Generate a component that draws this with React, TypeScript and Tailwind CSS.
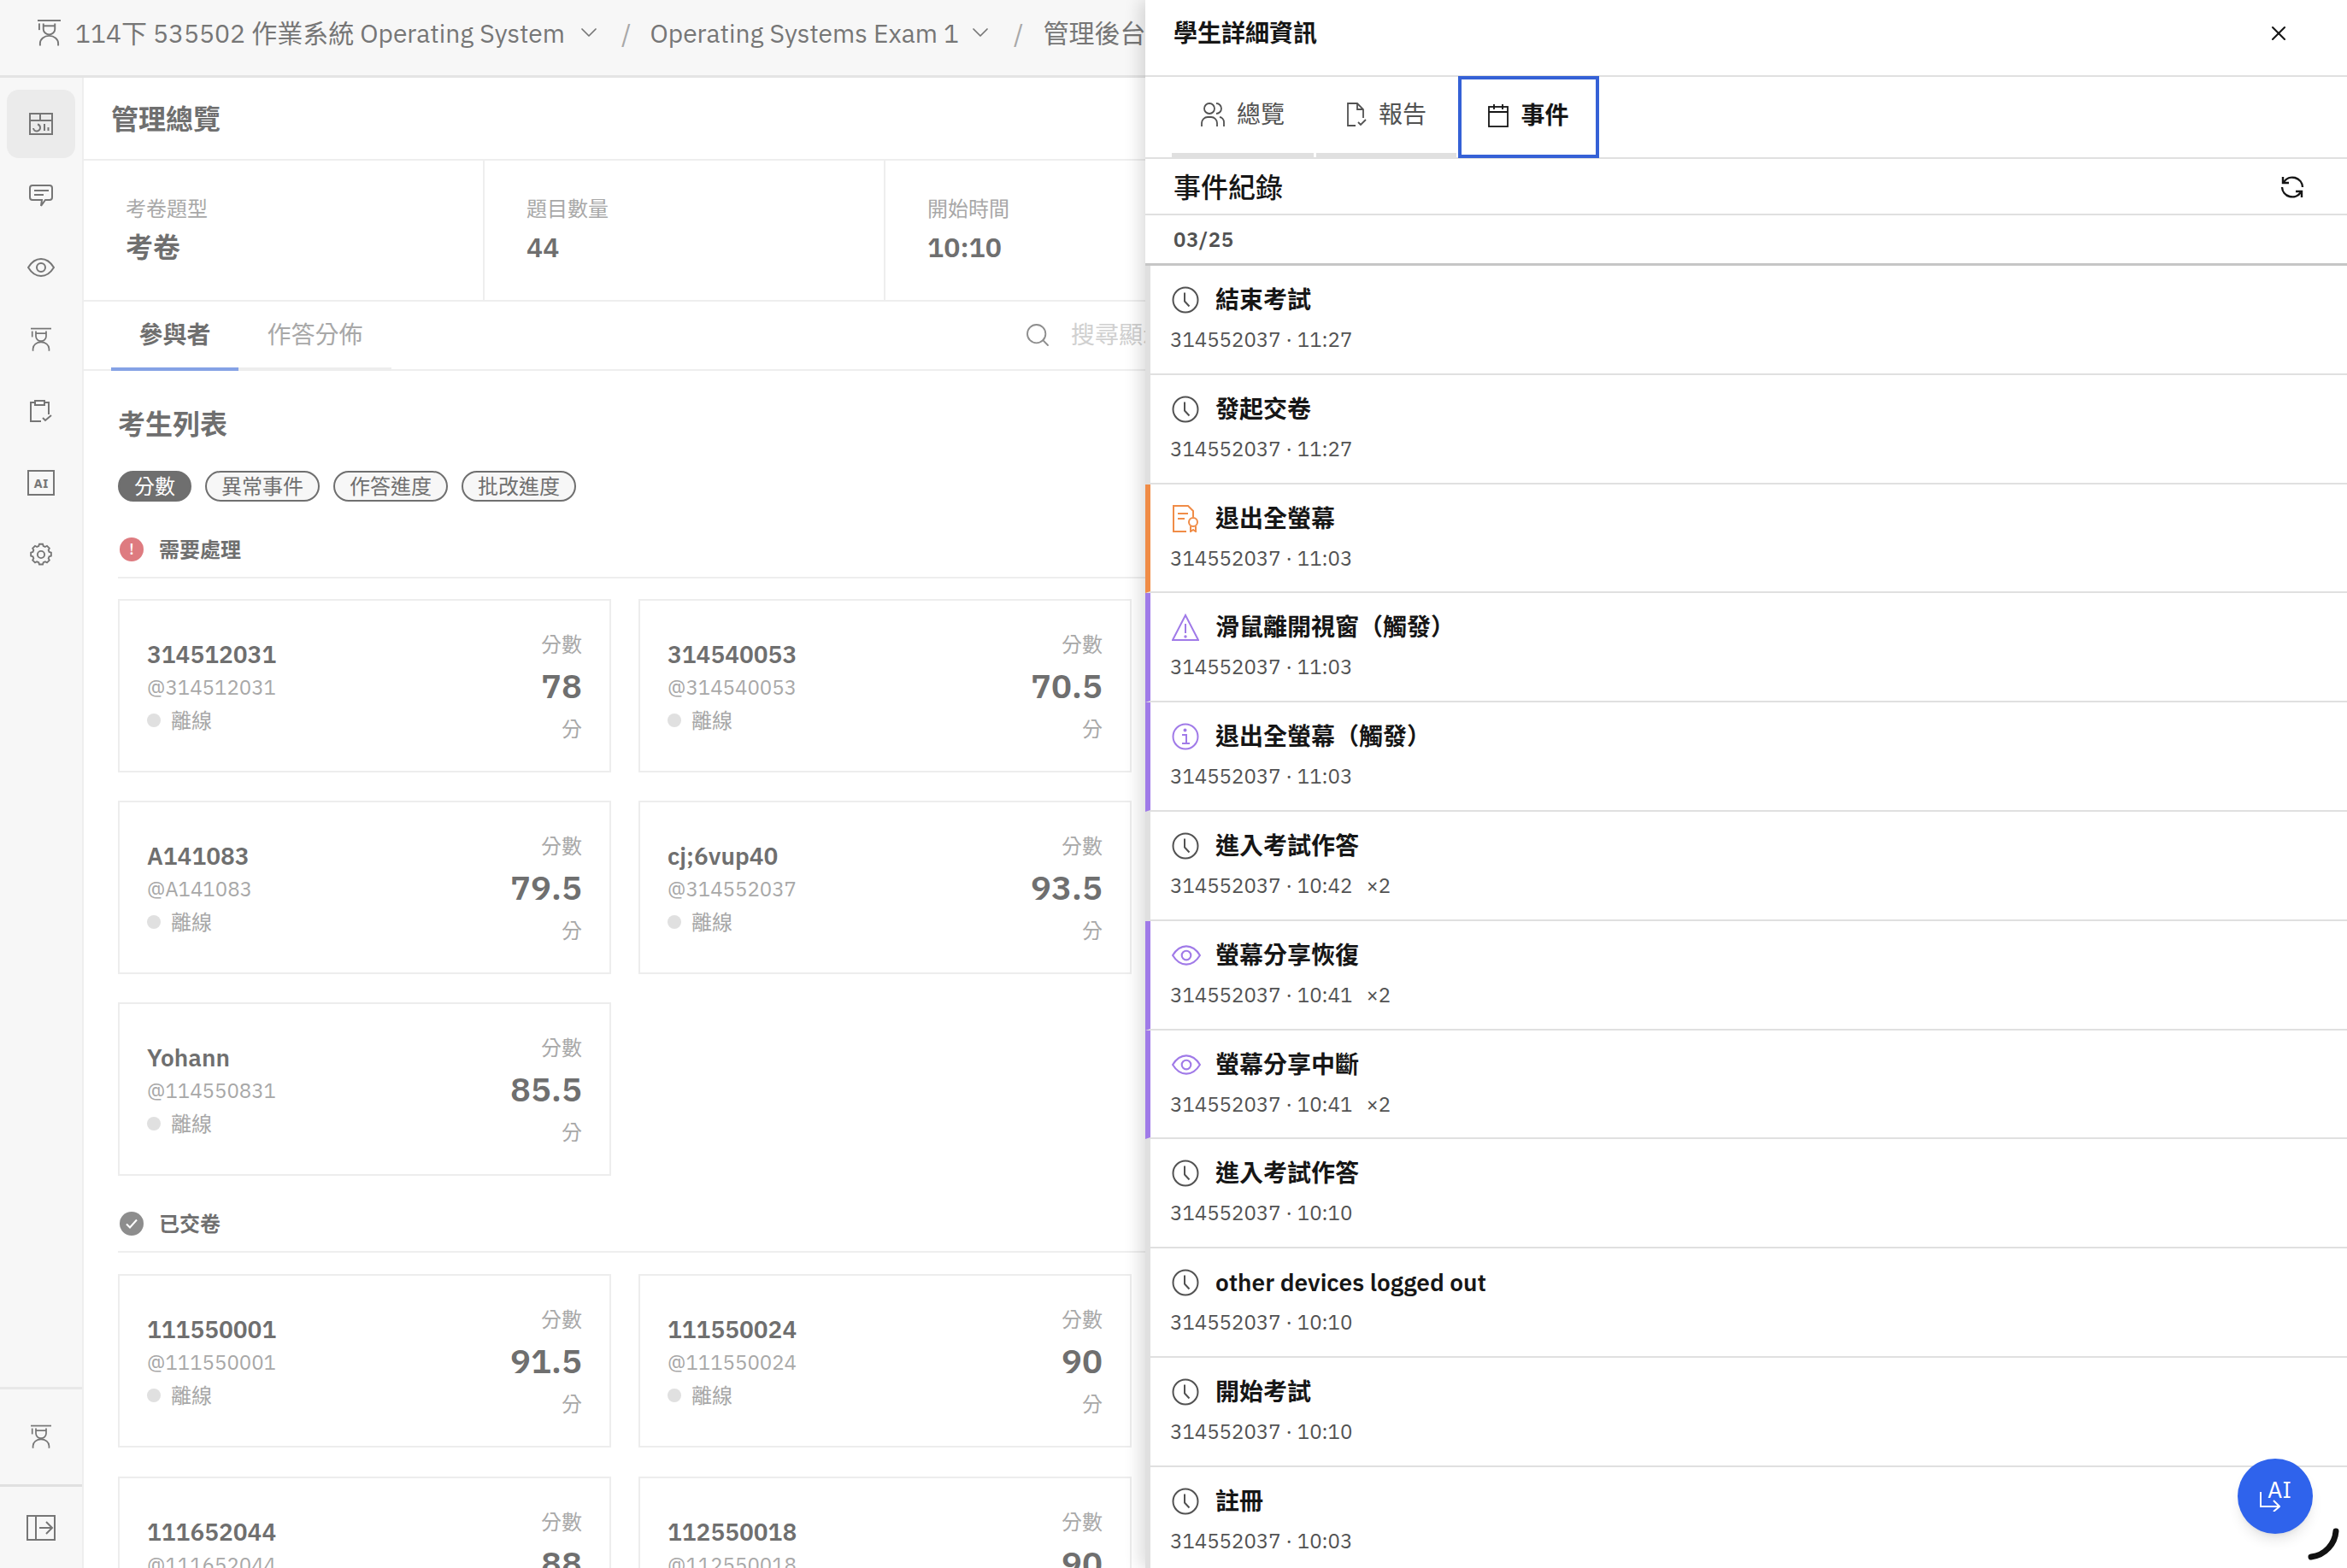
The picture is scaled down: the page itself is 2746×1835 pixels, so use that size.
import React from 'react';
import { ChevronDown, Search, X } from 'lucide-react';

const sans = "font-['IBM_Plex_Sans','Noto_Sans','Noto_Sans_CJK_TC',sans-serif]";

const LogoIcon = ({ className }: { className?: string }) => (
  <svg viewBox="0 0 28 32" fill="none" stroke="currentColor" strokeWidth="2" className={className}>
    <path d="M0 1.500h28" />
    <path d="M2 5v8" />
    <path d="M7 5v7a7 6.500 0 0 0 14 0V5" />
    <path d="M7 8h14" />
    <path d="M3 32v-3a11 9 0 0 1 22 0v3" />
  </svg>
);

const DashIcon = () => (
  <svg viewBox="0 0 28 26" fill="none" stroke="currentColor" strokeWidth="2" className="w-7 h-[26px]">
    <rect x="1" y="1" width="26" height="24" />
    <path d="M1 9h26M13 1v8" />
    <path d="M5 18a4 4 0 0 0 8-1 4 4 0 0 0-3-3.500" />
    <path d="M18 13v8M22.500 17v4" />
  </svg>
);

const ChatIcon = () => (
  <svg viewBox="0 0 28 26" fill="none" stroke="currentColor" strokeWidth="2" className="w-7 h-[26px]">
    <path d="M4 1h20a3 3 0 0 1 3 3v11a3 3 0 0 1-3 3h-5l-5 7 1-7H4a3 3 0 0 1-3-3V4a3 3 0 0 1 3-3z" />
    <path d="M6 7h17M6 12h11" />
  </svg>
);

const EyeIcon = ({ className }: { className?: string }) => (
  <svg viewBox="0 0 32 22" fill="none" stroke="currentColor" strokeWidth="2" className={className}>
    <path d="M1 11C5 4.500 10 1 16 1s11 3.500 15 10c-4 6.500-9 10-15 10S5 17.500 1 11z" />
    <circle cx="16" cy="11" r="5" />
  </svg>
);

const ClipboardIcon = () => (
  <svg viewBox="0 0 26 26" fill="none" stroke="currentColor" strokeWidth="2" className="w-[26px] h-[26px]">
    <path d="M6 3H1v22h12" />
    <path d="M17 3h5v14" />
    <rect x="6" y="1" width="11" height="5" />
    <path d="M15 21l3 3 7-6" />
  </svg>
);

const GearIcon = () => (
  <svg viewBox="0 0 24 24" fill="none" stroke="currentColor" strokeWidth="1.600" className="w-7 h-7">
    <path d="M9.670 3.500l.600-2h3.460l.600 2 1.800.750 1.840-1 2.450 2.450-1 1.840.750 1.800 2 .600v3.460l-2 .600-.750 1.800 1 1.840-2.450 2.450-1.840-1-1.800.750-.600 2h-3.460l-.600-2-1.800-.750-1.840 1-2.450-2.450 1-1.840-.750-1.800-2-.600v-3.460l2-.600.750-1.800-1-1.840 2.450-2.450 1.840 1z" />
    <circle cx="12" cy="12" r="3.500" />
  </svg>
);

const ExpandIcon = () => (
  <svg viewBox="0 0 34 30" fill="none" stroke="currentColor" strokeWidth="2" className="w-[34px] h-[30px]">
    <rect x="1" y="1" width="32" height="28" />
    <path d="M11 1v28" />
    <path d="M15 15h14M23 8l7 7-7 7" />
  </svg>
);

const ClockIcon = ({ className }: { className?: string }) => (
  <svg viewBox="0 0 32 32" fill="none" stroke="currentColor" strokeWidth="2" className={className}>
    <circle cx="16" cy="16" r="14.500" />
    <path d="M15 7.500v10l5.500 6" />
  </svg>
);

const CertIcon = ({ className }: { className?: string }) => (
  <svg viewBox="0 0 32 32" fill="none" stroke="currentColor" strokeWidth="2" className={className}>
    <path d="M17 31H2V1h17l6 6v7" />
    <path d="M7 10h12M7 16h8" />
    <circle cx="25" cy="20" r="5" />
    <path d="M22 25v6l3-2 3 2v-6" />
  </svg>
);

const WarnIcon = ({ className }: { className?: string }) => (
  <svg viewBox="0 0 32 32" fill="none" stroke="currentColor" strokeWidth="2" className={className}>
    <path d="M16 2L1 31h30z" />
    <path d="M16 12v11" />
    <circle cx="16" cy="27" r="0.700" />
  </svg>
);

const InfoIcon = ({ className }: { className?: string }) => (
  <svg viewBox="0 0 32 32" fill="none" stroke="currentColor" strokeWidth="2" className={className}>
    <circle cx="16" cy="16" r="14.500" />
    <path d="M12 14h5v10M12 24h9" />
    <circle cx="15.500" cy="8.500" r="1" />
  </svg>
);

const RenewIcon = () => (
  <svg viewBox="0 0 28 28" fill="none" stroke="currentColor" strokeWidth="2.400" className="w-7 h-7">
    <path d="M4 8A12 12 0 0 1 26 14" />
    <path d="M2 14A12 12 0 0 0 24 20" />
    <path d="M3 2v7h7" />
    <path d="M25 26v-7h-7" />
  </svg>
);

const PeopleIcon = () => (
  <svg viewBox="0 0 28 28" fill="none" stroke="currentColor" strokeWidth="1.800" className="w-7 h-7">
    <circle cx="10" cy="7" r="6" />
    <path d="M1 28v-4a7 7 0 0 1 7-7h4a7 7 0 0 1 7 7v4" />
    <path d="M18 1a6 6 0 0 1 0 12" />
    <path d="M22 17a6 6 0 0 1 5 6v5" />
  </svg>
);

const ReportIcon = () => (
  <svg viewBox="0 0 24 28" fill="none" stroke="currentColor" strokeWidth="1.800" className="w-6 h-7">
    <path d="M11 27H2V1h11l7 7v10" />
    <path d="M13 1v7h7" />
    <path d="M14 23l3 3 6-6" />
  </svg>
);

const CalendarIcon = () => (
  <svg viewBox="0 0 24 28" fill="none" stroke="currentColor" strokeWidth="1.800" className="w-6 h-7">
    <rect x="1" y="4" width="22" height="23" />
    <path d="M1 10h22M7 1v6M17 1v6" />
  </svg>
);

const navIcons = [
  { icon: <DashIcon />, active: true },
  { icon: <ChatIcon /> },
  { icon: <EyeIcon className="w-8 h-[22px]" /> },
  { icon: <LogoIcon className="w-6 h-7" /> },
  { icon: <ClipboardIcon /> },
  {
    icon: (
      <span className="w-8 h-[30px] border-2 border-[#767676] flex items-center justify-center text-[15px] font-bold leading-none">
        AI
      </span>
    ),
  },
  { icon: <GearIcon /> },
];

const stats = [
  { label: '考卷題型', value: '考卷' },
  { label: '題目數量', value: '44' },
  { label: '開始時間', value: '10:10' },
];

const filters = ['分數', '異常事件', '作答進度', '批改進度'];

const needAction = [
  { name: '314512031', handle: '@314512031', score: '78' },
  { name: '314540053', handle: '@314540053', score: '70.5' },
  { name: 'A141083', handle: '@A141083', score: '79.5' },
  { name: 'cj;6vup40', handle: '@314552037', score: '93.5' },
  { name: 'Yohann', handle: '@114550831', score: '85.5' },
];

const submitted = [
  { name: '111550001', handle: '@111550001', score: '91.5' },
  { name: '111550024', handle: '@111550024', score: '90' },
  { name: '111652044', handle: '@111652044', score: '88' },
  { name: '112550018', handle: '@112550018', score: '90' },
];

type Tone = 'gray' | 'orange' | 'purple';

const iconClass = 'w-8 h-8 shrink-0';

const events: { title: string; time: string; count?: boolean; tone: Tone; icon: React.ReactNode }[] = [
  { title: '結束考試', time: '11:27', tone: 'gray', icon: <ClockIcon className={iconClass} /> },
  { title: '發起交卷', time: '11:27', tone: 'gray', icon: <ClockIcon className={iconClass} /> },
  { title: '退出全螢幕', time: '11:03', tone: 'orange', icon: <CertIcon className={iconClass} /> },
  { title: '滑鼠離開視窗\uFF08觸發\uFF09', time: '11:03', tone: 'purple', icon: <WarnIcon className={iconClass} /> },
  { title: '退出全螢幕\uFF08觸發\uFF09', time: '11:03', tone: 'purple', icon: <InfoIcon className={iconClass} /> },
  { title: '進入考試作答', time: '10:42', count: true, tone: 'gray', icon: <ClockIcon className={iconClass} /> },
  { title: '螢幕分享恢復', time: '10:41', count: true, tone: 'purple', icon: <EyeIcon className="w-[34px] h-6 shrink-0" /> },
  { title: '螢幕分享中斷', time: '10:41', count: true, tone: 'purple', icon: <EyeIcon className="w-[34px] h-6 shrink-0" /> },
  { title: '進入考試作答', time: '10:10', tone: 'gray', icon: <ClockIcon className={iconClass} /> },
  { title: 'other devices logged out', time: '10:10', tone: 'gray', icon: <ClockIcon className={iconClass} /> },
  { title: '開始考試', time: '10:10', tone: 'gray', icon: <ClockIcon className={iconClass} /> },
  { title: '註冊', time: '10:03', tone: 'gray', icon: <ClockIcon className={iconClass} /> },
];

const StudentCard = ({ name, handle, score }: { name: string; handle: string; score: string }) => (
  <div className="h-[203px] border-2 border-[#ededed] px-8 flex justify-between bg-white">
    <div className="pt-[45px]">
      <div className="text-[28px] leading-9 font-semibold text-[#6f6f6f]">{name}</div>
      <div className="text-2xl leading-8 mt-[4px] text-[#a8a8a8]">{handle}</div>
      <div className="flex items-center gap-3 mt-[7px] text-2xl leading-8 text-[#a8a8a8]">
        <span className="w-4 h-4 rounded-full bg-[#e0e0e0]" />
        離線
      </div>
    </div>
    <div className="pt-[35px] flex flex-col items-end">
      <div className="text-2xl leading-8 text-[#a8a8a8]">分數</div>
      <div className="text-[40px] leading-[50px] font-semibold text-[#6f6f6f] mt-[7px]">{score}</div>
      <div className="text-2xl leading-8 text-[#a8a8a8] mt-[10px]">分</div>
    </div>
  </div>
);

const SectionTitle = ({ icon, title }: { icon: React.ReactNode; title: string }) => (
  <div className="h-[48px] border-b-2 border-[#eeeeee] flex items-start gap-[18px] pl-[2px]">
    {icon}
    <span className="text-2xl leading-7 font-semibold text-[#6f6f6f]">{title}</span>
  </div>
);

const App = () => {
  return (
    <div className={`relative w-[2746px] h-[1835px] overflow-hidden bg-white ${sans}`}>
      {/* page under the drawer */}
      <div className="h-[91px] bg-[#f7f7f7] border-b-[3px] border-[#e4e4e4] flex items-center pl-[44px] pb-[12px] text-[30px] text-[#767676] whitespace-nowrap">
        <LogoIcon className="w-[27px] h-8 shrink-0" />
        <span className="ml-[17px]">114下 535502 作業系統 Operating System</span>
        <ChevronDown className="ml-3 w-8 h-8 shrink-0" strokeWidth={1.3} />
        <span className="ml-[22px] text-[#a8a8a8]">/</span>
        <span className="ml-[22px]">Operating Systems Exam 1</span>
        <ChevronDown className="ml-[9px] w-8 h-8 shrink-0" strokeWidth={1.3} />
        <span className="ml-[23px] text-[#a8a8a8]">/</span>
        <span className="ml-[23px]">管理後台</span>
      </div>

      <div className="flex h-[1744px]">
        <aside className="w-[98px] shrink-0 bg-[#f7f7f7] border-r-2 border-[#eeeeee] flex flex-col text-[#767676]">
          <div className="flex flex-col items-center pt-[14px] gap-[4px]">
            {navIcons.map((item, i) => (
              <div
                key={i}
                className={`w-20 h-20 rounded-[14px] flex items-center justify-center ${item.active ? 'bg-[#ebebeb]' : ''}`}
              >
                {item.icon}
              </div>
            ))}
          </div>
          <div className="mt-auto border-t-[3px] border-[#e8e8e8] h-[114px] flex items-center justify-center pb-[2px]">
            <LogoIcon className="w-6 h-7" />
          </div>
          <div className="border-t-[3px] border-[#e0e0e0] h-[98px] flex justify-center pt-[33px]">
            <ExpandIcon />
          </div>
        </aside>

        <main className="flex-1 min-w-0 bg-white">
          <div className="h-[97px] border-b-2 border-[#eeeeee] flex items-center pl-8 text-[32px] font-semibold text-[#6f6f6f]">
            管理總覽
          </div>

          <div className="h-[165px] border-b-2 border-[#eeeeee] flex">
            {stats.map((s) => (
              <div key={s.label} className="w-[469px] border-r-2 border-[#eeeeee] pl-[49px] pt-[40px]">
                <div className="text-2xl leading-8 text-[#a8a8a8]">{s.label}</div>
                <div className="text-[32px] leading-10 font-semibold text-[#6f6f6f] mt-[9px]">{s.value}</div>
              </div>
            ))}
          </div>

          <div className="h-[81px] border-b-2 border-[#eeeeee] flex items-end pl-8 relative">
            <div className="w-[149px] h-[79px] border-b-4 border-[#85a2e5] flex items-center justify-center pb-[1px] text-[28px] font-semibold text-[#6f6f6f] -mb-[2px]">
              參與者
            </div>
            <div className="w-[179px] h-[79px] border-b-4 border-[#ededed] flex items-center justify-center pb-[1px] text-[28px] text-[#a8a8a8] -mb-[2px]">
              作答分佈
            </div>
            <div className="ml-[740px] w-[142px] overflow-hidden flex items-center gap-[23px] h-[79px] pb-[1px] text-[28px] text-[#d0d0d0] whitespace-nowrap">
              <Search className="w-8 h-8 shrink-0 text-[#8d8d8d]" strokeWidth={1.4} />
              搜尋顯示名稱
            </div>
          </div>

          <div className="pl-[40px]">
            <h2 className="pt-[42px] text-[32px] leading-10 font-semibold text-[#6f6f6f]">考生列表</h2>
            <div className="flex gap-4 mt-[35px]">
              {filters.map((f, i) => (
                <span
                  key={f}
                  className={`h-9 px-[17px] rounded-full border-2 border-[#6f6f6f] flex items-center text-2xl ${i === 0 ? 'bg-[#6f6f6f] text-white' : 'bg-[#f7f7f7] text-[#6f6f6f]'}`}
                >
                  {f}
                </span>
              ))}
            </div>

            <div className="mt-[42px]">
              <SectionTitle
                title="需要處理"
                icon={
                  <span className="w-7 h-7 rounded-full bg-[#de7b80] text-white flex items-center justify-center text-lg font-medium leading-none">
                    !
                  </span>
                }
              />
            </div>
            <div className="grid grid-cols-[577px_577px] gap-x-8 gap-y-[33px] mt-6">
              {needAction.map((s) => (
                <StudentCard key={s.name} {...s} />
              ))}
            </div>

            <div className="mt-[42px]">
              <SectionTitle
                title="已交卷"
                icon={
                  <span className="w-7 h-7 rounded-full bg-[#8d8d8d] flex items-center justify-center">
                    <svg viewBox="0 0 16 16" fill="none" stroke="white" strokeWidth="2" className="w-4 h-4">
                      <path d="M2 8.500l4 4 8-9" />
                    </svg>
                  </span>
                }
              />
            </div>
            <div className="grid grid-cols-[577px_577px] gap-x-8 gap-y-[34px] mt-[25px]">
              {submitted.map((s) => (
                <StudentCard key={s.name} {...s} />
              ))}
            </div>
          </div>
        </main>
      </div>

      {/* event drawer */}
      <div className="absolute top-0 right-0 bottom-0 w-[1406px] bg-white shadow-[-6px_0_18px_rgba(0,0,0,0.14)] flex flex-col overflow-hidden text-[#161616]">
        <div className="h-[90px] shrink-0 border-b-2 border-[#e0e0e0] flex items-center justify-between pl-[33px] pr-[66px] pb-[10px]">
          <span className="text-[28px] font-semibold">學生詳細資訊</span>
          <X className="w-[28px] h-[28px]" strokeWidth={1.8} />
        </div>

        <div className="h-[96px] shrink-0 border-b-2 border-[#e0e0e0] flex pl-[31px] relative">
          <div className="w-[166px] h-[94px] border-b-[5px] border-[#e0e0e0] flex items-center justify-center gap-[14px] pb-[2px] text-[28px] text-[#525252] mr-[3px]">
            <PeopleIcon />
            總覽
          </div>
          <div className="w-[164px] h-[94px] border-b-[5px] border-[#e0e0e0] flex items-center justify-center gap-[14px] pb-[2px] text-[28px] text-[#525252] mr-[2px]">
            <ReportIcon />
            報告
          </div>
          <div className="w-[165px] h-[96px] border-4 border-[#3561d6] flex items-center justify-center gap-[14px] pb-[5px] text-[28px] font-semibold -mt-[1px]">
            <CalendarIcon />
            事件
          </div>
        </div>

        <div className="h-[66px] shrink-0 border-b-2 border-[#e0e0e0] flex items-center justify-between pl-[33px] pr-[50px] pt-[2px]">
          <span className="text-[32px] font-medium">事件紀錄</span>
          <RenewIcon />
        </div>

        <div className="h-[59px] shrink-0 border-b-[3px] border-[#c6c6c6] flex items-center pl-[33px] text-2xl font-semibold text-[#525252] tracking-[0.5px]">
          03/25
        </div>

        {events.map((e, i) => (
          <div
            key={i}
            className={`h-[127.8px] shrink-0 border-l-[6px] border-b-2 border-b-[#e0e0e0] pl-[25px] pt-[22px] ${
              e.tone === 'orange' ? 'border-l-[#f08c47]' : e.tone === 'purple' ? 'border-l-[#a07ae8]' : 'border-l-[#e0e0e0]'
            }`}
          >
            <div
              className={`flex items-center h-9 ${
                e.tone === 'orange' ? 'text-[#f08c47]' : e.tone === 'purple' ? 'text-[#a07ae8]' : 'text-[#525252]'
              }`}
            >
              <span className="w-[51px] shrink-0">{e.icon}</span>
              <span className="text-[28px] font-semibold text-[#161616] whitespace-nowrap">{e.title}</span>
            </div>
            <div className="mt-[12px] -ml-[2px] text-2xl leading-8 text-[#525252]">
              314552037 · {e.time}
              {e.count && <span className="ml-4">×2</span>}
            </div>
          </div>
        ))}
      </div>

      {/* AI button */}
      <div className="absolute left-[2618px] top-[1707px] w-[88px] h-[88px] rounded-full bg-[#2f63ec] shadow-lg flex items-center justify-center text-white">
        <span className="relative w-[36px] h-[36px]">
          <span className="absolute left-[9px] -top-[6px] text-[27px] leading-8">AI</span>
          <svg viewBox="0 0 24 24" fill="none" stroke="currentColor" strokeWidth="2" className="absolute left-0 top-[12px] w-6 h-6">
            <path d="M1 1v17h22" />
            <path d="M16 11l7 7-7 6" />
          </svg>
        </span>
      </div>

      {/* pointer arc */}
      <svg viewBox="0 0 38 38" fill="none" className="absolute left-[2699px] top-[1788px] w-[38px] h-[38px]">
        <path d="M34 4C33 18 22 32 5 34" stroke="#111111" strokeWidth="7" strokeLinecap="round" />
      </svg>
    </div>
  );
};

export default App;
